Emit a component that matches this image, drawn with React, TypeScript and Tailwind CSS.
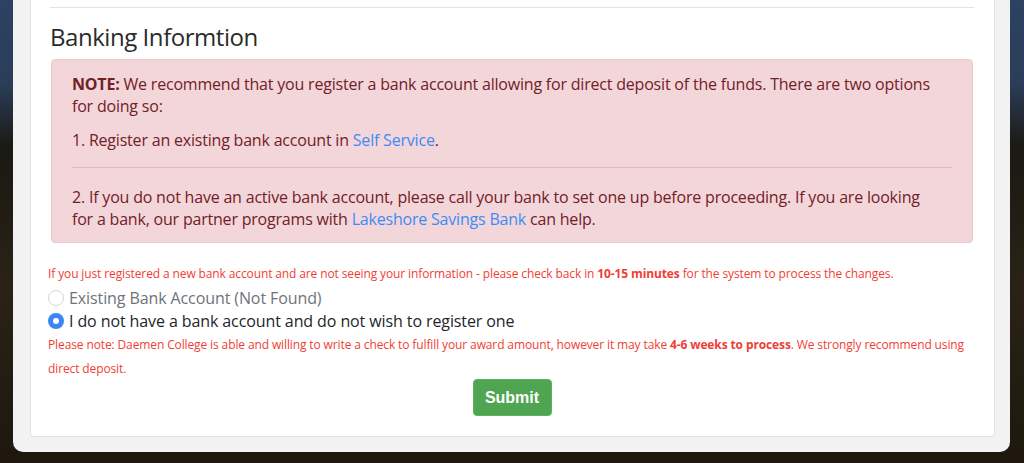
import React from "react";

const font = { fontFamily: '"Open Sans", "Noto Sans", sans-serif' };

export default function App() {
  return (
    <div className="w-[1024px] h-[463px] overflow-hidden bg-[linear-gradient(180deg,#2c4262_0%,#2b3d58_18%,#1a1913_32%,#2a2216_62%,#1d170e_100%)]">
      <div className="ml-[13px] w-[997px] h-[452px] bg-[#f2f2f2] rounded-b-[10px] flex flex-col pb-[15px]">
        <div
          className="ml-[17px] w-[965px] flex-1 bg-white border-x border-b border-[#e3e3e3] rounded-b-[4px] pt-[7px] pl-[19px] pr-[20px] flex flex-col"
          style={font}
        >
          <div className="border-t border-[#e2e2e2]" />
          <h3 className="mt-[14px] text-[24px] leading-[29px] tracking-[-0.45px] text-[#2b2b2b]">Banking Informtion</h3>
          <div className="mt-[8px] ml-[1px] mr-[1px] bg-[#f3d6d9] border border-[#efc8cd] rounded-[4px] pl-[20px] pr-[20px] pt-[13px] pb-[12px] text-[16px] leading-[22px] tracking-[-0.2px] text-[#722028]">
            <p className="mb-[12px]">
              <b>NOTE:</b> We recommend that you register a bank account allowing for direct deposit of the funds. There are two options for doing so:
            </p>
            <p>
              1. Register an existing bank account in <span className="text-[#3d8bf7]">Self Service</span>.
            </p>
            <div className="mt-[16px] mb-[18px] border-t border-[#e7b9bf]" />
            <p className="pr-[12px]">
              2. If you do not have an active bank account, please call your bank to set one up before proceeding. If you are looking for a bank, our partner programs with <span className="text-[#3d8bf7]">Lakeshore Savings Bank</span> can help.
            </p>
          </div>
          <p className="mt-[22px] -ml-[2px] text-[12px] leading-[18px] tracking-[-0.12px] text-[#f23d35]">
            If you just registered a new bank account and are not seeing your information - please check back in <b>10-15 minutes</b> for the system to process the changes.
          </p>
          <label className="-ml-[2px] mt-[3px] flex items-center gap-[5px] h-[23px] text-[16px] tracking-[-0.1px] text-[#6e7479]">
            <span className="w-[16px] h-[16px] rounded-full border border-[#d4d4d4] bg-white" />
            Existing Bank Account (Not Found)
          </label>
          <label className="-ml-[2px] flex items-center gap-[5px] h-[23px] text-[16px] tracking-[-0.1px] text-[#23262a]">
            <span className="w-[16px] h-[16px] rounded-full bg-[#3b85f5] flex items-center justify-center">
              <span className="w-[6px] h-[6px] rounded-full bg-white" />
            </span>
            I do not have a bank account and do not wish to register one
          </label>
          <p className="-ml-[2px] mt-[1px] text-[12px] leading-[24px] tracking-[-0.12px] text-[#f23d35]">
            Please note: Daemen College is able and willing to write a check to fulfill your award amount, however it may take <b>4-6 weeks to process</b>. We strongly recommend using direct deposit.
          </p>
          <div className="flex justify-center -mt-[2px]">
            <button
              className="w-[79px] h-[37px] rounded-[4px] bg-[#50a552] border border-[#5cb25e] text-white font-bold text-[16px]"
              style={{ fontFamily: '"Liberation Sans", Arial, sans-serif' }}
            >
              Submit
            </button>
          </div>
        </div>
      </div>
    </div>
  );
}
